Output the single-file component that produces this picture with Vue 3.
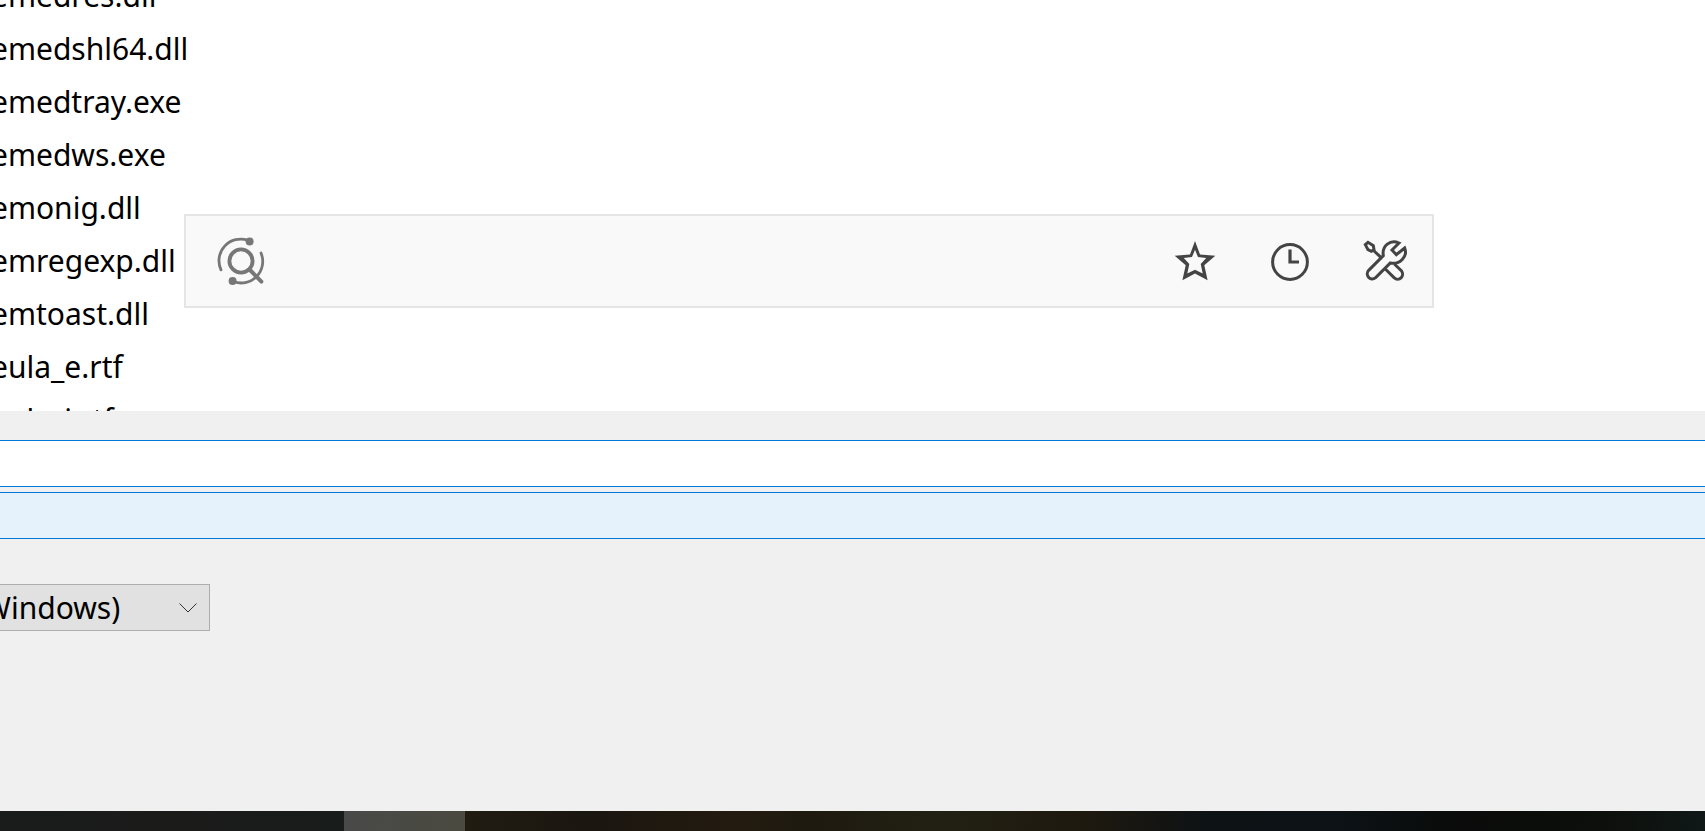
<template>
  <div class="desktop">
    <main class="file-pane">
      <ul class="file-list">
        <li v-for="file in files" :key="file">{{ file }}</li>
      </ul>
    </main>

    <section class="dialog-panel">
      <input v-model="fileName" class="field" type="text" aria-label="File name">
      <button class="field field-hover" type="button" aria-label="File type"></button>
      <div class="encoding">
        <select v-model="encoding" aria-label="Encoding">
          <option value="windows">Windows)</option>
        </select>
        <svg class="chevron" width="18" height="10" viewBox="0 0 18 10" aria-hidden="true">
          <path d="M0.5 0.5 L9 9 L17.5 0.5" />
        </svg>
      </div>
    </section>

    <footer class="taskbar">
      <div class="taskbar-left"></div>
      <button class="taskbar-item" type="button" aria-label="Active window"></button>
      <div class="taskbar-right"></div>
    </footer>

    <form class="search-bar" @submit.prevent>
      <svg class="search-icon" width="48" height="48" viewBox="-24 -24 48 48" aria-hidden="true">
        <circle r="11.6" stroke-width="3.8" />
        <path d="M9 9 L20.4 20.6" stroke-width="4" />
        <path d="M-20 8.8 A21.6 21.6 0 0 1 7 -20.6" stroke-width="2.8" />
        <path d="M20 -8 A21.6 21.6 0 0 1 -7 20.8" stroke-width="2.8" />
        <circle class="dot" cx="8.6" cy="-19.6" r="4" />
        <circle class="dot" cx="-8.4" cy="20" r="4" />
      </svg>
      <input v-model="query" class="search-input" type="text" aria-label="Search">

      <button class="tool" type="button" aria-label="Favorites">
        <svg width="48" height="48" viewBox="-24 -24 48 48" aria-hidden="true">
          <path class="solid" fill-rule="evenodd" d="M0 -20 L5 -6.6 L20.3 -5.2 L9.3 4.2 L12.6 19.2 L0 12.6 L-12.6 19.2 L-9.3 4.2 L-20.3 -5.2 L-5 -6.6 Z M0 -11.2 L-3 -3.9 L-11.2 -3 L-5.7 3 L-7.7 12.4 L0 8.8 L7.7 12.4 L5.7 3 L11.2 -3 L3 -3.9 Z" />
        </svg>
      </button>
      <button class="tool" type="button" aria-label="History">
        <svg width="48" height="48" viewBox="-24 -25 48 48" aria-hidden="true">
          <circle r="17.4" stroke-width="3" />
          <path d="M0 -12.6 V0 H9" stroke-width="3.2" />
        </svg>
      </button>
      <button class="tool" type="button" aria-label="Tools">
        <svg width="48" height="48" viewBox="33 81 144 144" aria-hidden="true">
          <g stroke-width="9">
            <path d="M46 104 L54 97 L70 107 L72 119 L64 124 L54 119 Z" />
            <path d="M69 120 L96 145" />
            <path d="M100 137 L56 181 C44 194 60 216 77 203 L121 159 C149 165 174 140 164 114 L139 134 L126 120 L147 99 C121 87 95 108 100 137 Z" />
            <path d="M106 177 L132 203 C147 217 166 198 154 182 L133 162" />
          </g>
        </svg>
      </button>
    </form>
  </div>
</template>

<script setup>
import { ref } from 'vue'

const files = [
  'emedres.dll',
  'emedshl64.dll',
  'emedtray.exe',
  'emedws.exe',
  'emonig.dll',
  'emregexp.dll',
  'emtoast.dll',
  'eula_e.rtf',
  'eula_j.rtf'
]

const fileName = ref('')
const encoding = ref('windows')
const query = ref('')
</script>

<style>
* { margin: 0; padding: 0; box-sizing: border-box; }
html, body, #app { height: 100%; }
body {
  font-family: 'Noto Sans', 'Open Sans', sans-serif;
  background: #f0f0f0; color: #000; overflow: hidden;
}
</style>

<style scoped>
.desktop {
  position: relative;
  display: flex;
  flex-direction: column;
  height: 100%;
  font-size: 30px;
}
button, input, select { font: inherit; color: inherit; border-radius: 0; outline: none; }

/* File list, scrolled part of a row */
.file-pane { flex: 1; min-height: 0; overflow: hidden; background: #fff; }
.file-list { list-style: none; margin-top: -31px; margin-left: -9px; }
.file-list li { line-height: 53px; white-space: nowrap; }

.dialog-panel {
  display: flex;
  flex-direction: column;
  gap: 5px;
  min-height: 400px;
  padding-top: 29px;
  background: #f0f0f0;
}
.field {
  width: 100%;
  height: 47px;
  border: solid #0078d7;
  border-width: 1px 0;
  background: #fff;
}
.field-hover { background: #e5f1fb; }

.encoding {
  display: grid;
  align-items: center;
  width: 210px;
  height: 47px;
  margin-top: 40px;
  border: 1px solid #adadad;
  border-left: 0;
  background: #e1e1e1;
  overflow: hidden;
}
.encoding select {
  grid-area: 1 / 1;
  appearance: none;
  height: 45px;
  margin-left: -17px;
  border: 0;
  background: transparent;
}
.chevron {
  grid-area: 1 / 1;
  justify-self: end;
  margin-right: 12px;
  fill: none;
  stroke: #333;
  pointer-events: none;
}

.taskbar { display: flex; height: 20px; flex-shrink: 0; }
.taskbar-left { width: 344px; background: linear-gradient(90deg, #191c1b, #1b1b1a 50%, #181c1b); }
.taskbar-item { width: 121px; border: 0; background: linear-gradient(90deg, #494949, #4a4a40); }
.taskbar-right {
  flex: 1;
  background: linear-gradient(90deg, #211c12, #1a1610 10%, #241b10 22%, #1e1a10 28%, #222013 38%, #1e190f 50%, #0d1214 60%, #0c1216 70%, #0a0b0a 80%, #0d0f0c 92%, #0f1817);
}

/* Launcher window floating above the dialog */
.search-bar {
  position: absolute;
  top: 214px;
  left: 184px;
  right: 271px;
  display: flex;
  align-items: center;
  height: 94px;
  padding-left: 31px;
  border: 2px solid #e5e5e5;
  background: #f9f9f9;
}
.search-icon {
  flex-shrink: 0;
  fill: none;
  stroke: #777;
  stroke-linecap: round;
}
.search-icon .dot { fill: #777; stroke: none; }
.search-input {
  flex: 1;
  min-width: 0;
  height: 60px;
  padding: 0 20px;
  border: 0;
  background: transparent;
}
.tool {
  display: flex;
  align-items: center;
  justify-content: center;
  width: 95px;
  height: 90px;
  border: 0;
  background: transparent;
}
.tool svg { fill: none; stroke: #444; }
.tool .solid { fill: #444; stroke: none; }
</style>
